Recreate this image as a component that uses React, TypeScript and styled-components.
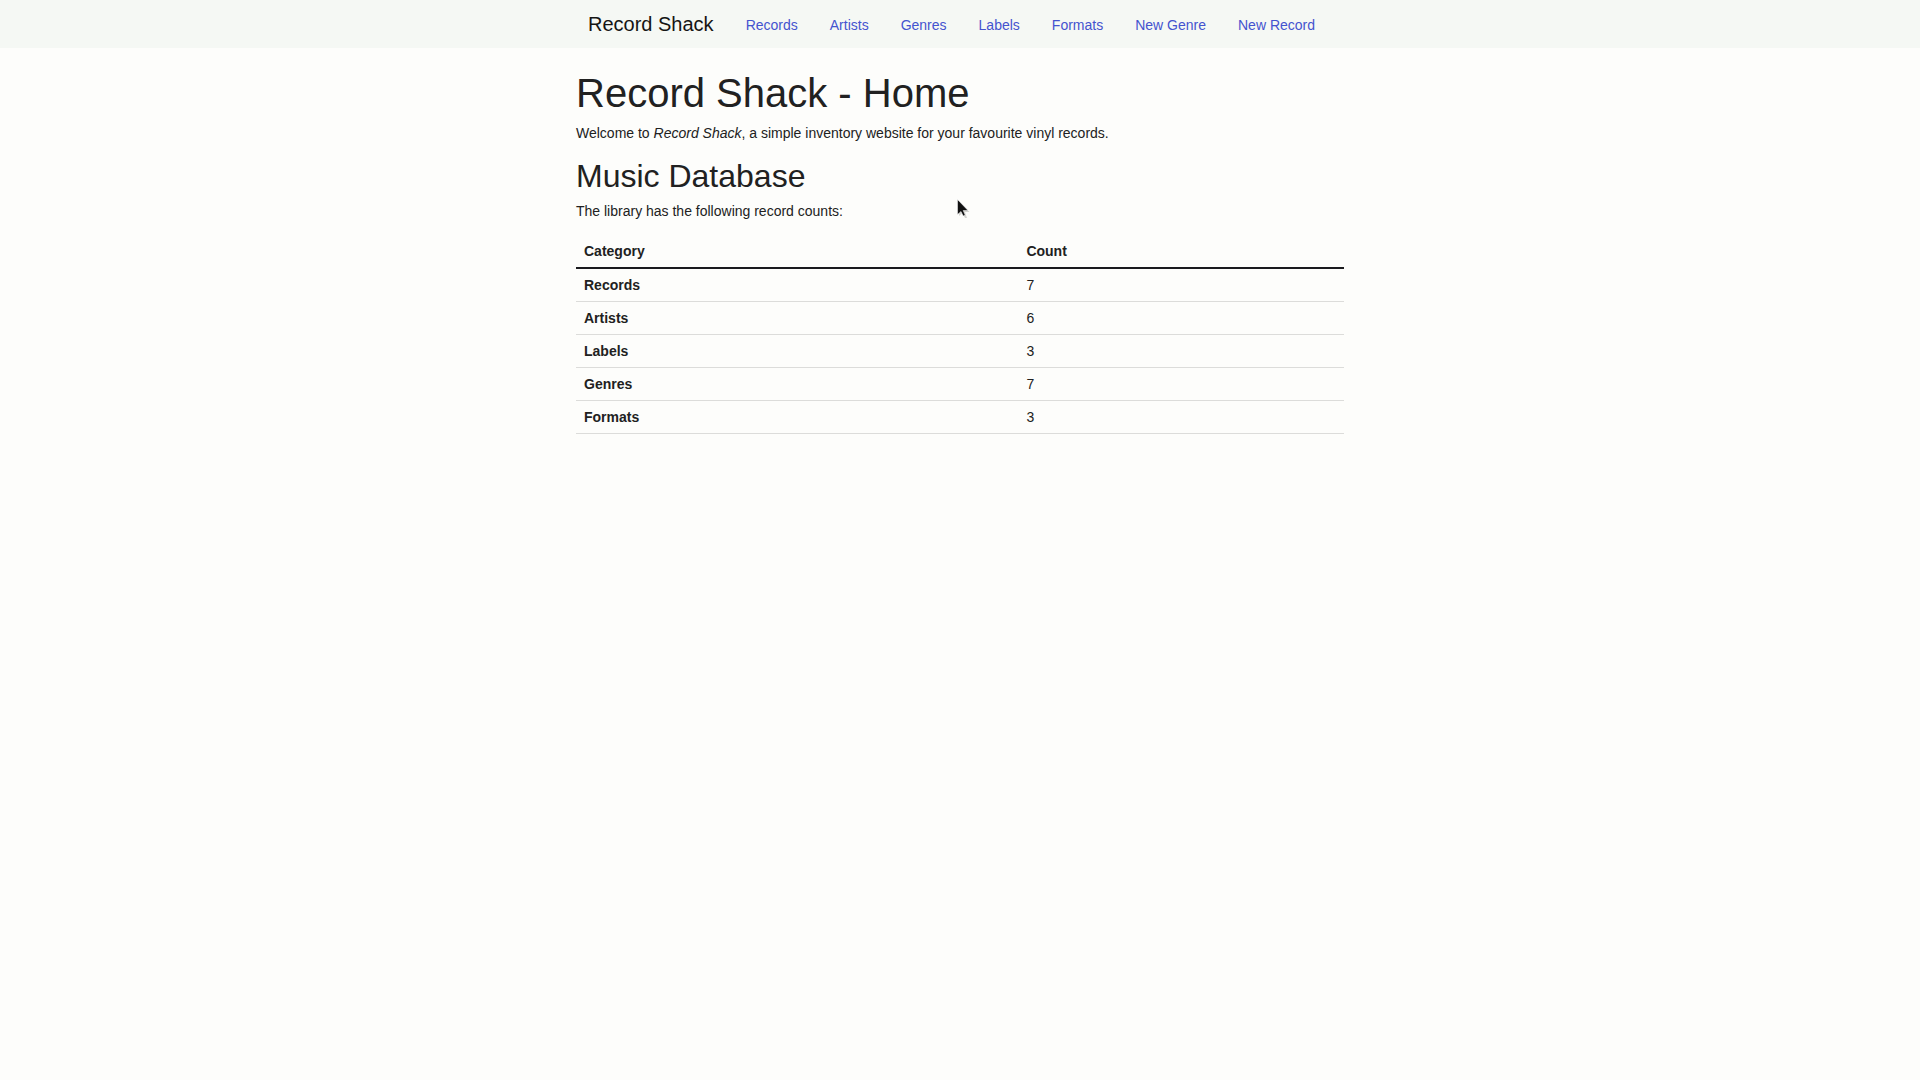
import React from "react";
import styled, { createGlobalStyle } from "styled-components";

const GlobalStyle = createGlobalStyle`
  *, *::before, *::after { box-sizing: border-box; }
  body {
    margin: 0;
    background: #fdfdfb;
    color: #212121;
    font-family: "Liberation Sans", Arial, sans-serif;
    font-size: 14px;
    line-height: 16px;
  }
`;

const Header = styled.header`
  background: #f5f8f4;
`;

const Nav = styled.nav`
  display: flex;
  align-items: center;
  gap: 32px;
  max-width: 768px;
  min-height: 48px;
  margin: 0 auto;
  padding: 0 12px;
`;

const Brand = styled.a`
  color: #151515;
  font-size: 20px;
  line-height: 24px;
  text-decoration: none;
  white-space: nowrap;
`;

const NavList = styled.ul`
  display: flex;
  gap: 32px;
  margin: 0;
  padding: 2px 0 0;
  list-style: none;
`;

const NavLink = styled.a`
  color: #4453cf;
  text-decoration: none;
  white-space: nowrap;
`;

const Main = styled.main`
  position: relative;
  max-width: 768px;
  margin: 0 auto;
  padding-top: 21px;
`;

const Title = styled.h1`
  margin: 0 0 8px;
  font-size: 40px;
  line-height: 48px;
  font-weight: 400;
`;

const Subtitle = styled.h2`
  margin: 0 0 8px;
  font-size: 32px;
  line-height: 38px;
  font-weight: 400;
`;

const Text = styled.p`
  margin: 0 0 16px;
`;

const Table = styled.table`
  width: 100%;
  border-spacing: 0;
  text-align: left;

  th, td {
    padding: 8px;
    border-bottom: 1px solid #dcdcda;
  }

  thead th {
    border-bottom: 2px solid #1a1a1e;
  }
`;

const Pointer = styled.svg`
  position: absolute;
  top: 151px;
  left: 381px;
  pointer-events: none;
`;

const links = ["Records", "Artists", "Genres", "Labels", "Formats", "New Genre", "New Record"];

const counts = [
  { category: "Records", count: 7 },
  { category: "Artists", count: 6 },
  { category: "Labels", count: 3 },
  { category: "Genres", count: 7 },
  { category: "Formats", count: 3 },
];

export default function App() {
  return (
    <>
      <GlobalStyle />
      <Header>
        <Nav>
          <Brand href="#">Record Shack</Brand>
          <NavList>
            {links.map((label) => (
              <li key={label}>
                <NavLink href="#">{label}</NavLink>
              </li>
            ))}
          </NavList>
        </Nav>
      </Header>
      <Main>
        <Title>Record Shack - Home</Title>
        <Text>
          Welcome to <em>Record Shack</em>, a simple inventory website for your favourite vinyl records.
        </Text>
        <Subtitle>Music Database</Subtitle>
        <Text>The library has the following record counts:</Text>
        <Table>
          <thead>
            <tr>
              <th scope="col">Category</th>
              <th scope="col">Count</th>
            </tr>
          </thead>
          <tbody>
            {counts.map(({ category, count }) => (
              <tr key={category}>
                <th scope="row">{category}</th>
                <td>{count}</td>
              </tr>
            ))}
          </tbody>
        </Table>
        <Pointer width="14" height="20" viewBox="0 0 14 20" aria-hidden="true">
          <path
            d="M2 2V17L5.5 14L8 19H10L8 13H12.500Z"
            fill="#b9b9b4"
            opacity="0.6"
          />
          <path
            d="M.5 .5V15.500L4 12.500L6.200 17L8.200 16L6.200 11.500H11Z"
            fill="#111111"
            stroke="#ffffff"
            strokeWidth="0.5"
          />
        </Pointer>
      </Main>
    </>
  );
}
